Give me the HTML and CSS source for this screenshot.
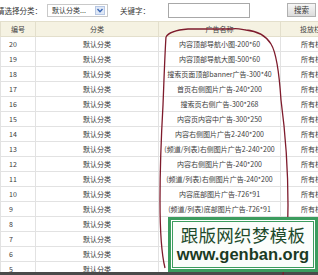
FILE: index.html
```html
<!DOCTYPE html>
<html>
<head>
<meta charset="utf-8">
<link rel="stylesheet" href="styles.css">
</head>
<body>
<div class="page">
  <div class="filter">
    <span class="label">请选择分类：</span>
    <div class="select"><span>默认分类...</span><i class="arrow"><svg width="8" height="7" viewBox="0 0 8 7"><path d="M1.5 2 L4 4.8 L6.5 2" fill="none" stroke="#3a66b5" stroke-width="1.4"/></svg></i></div>
    <span class="label kw">关键字：</span>
    <div class="input"></div>
    <div class="btn">搜索</div>
  </div>
  <table class="grid">
    <thead>
      <tr><th class="c-id">编号</th><th class="c-cat">分类</th><th class="c-name">广告名称</th><th class="c-pos">投放栏目</th></tr>
    </thead>
    <tbody>
      <tr><td class="c-id">20</td><td class="c-cat">默认分类</td><td class="c-name">内容顶部导航小图-200*60</td><td class="c-pos">所有栏目</td></tr>
      <tr><td class="c-id">19</td><td class="c-cat">默认分类</td><td class="c-name">内容顶部导航大图-500*60</td><td class="c-pos">所有栏目</td></tr>
      <tr><td class="c-id">18</td><td class="c-cat">默认分类</td><td class="c-name">搜索页面顶部banner广告-300*40</td><td class="c-pos">所有栏目</td></tr>
      <tr><td class="c-id">17</td><td class="c-cat">默认分类</td><td class="c-name">首页右侧图片广告-240*200</td><td class="c-pos">所有栏目</td></tr>
      <tr><td class="c-id">16</td><td class="c-cat">默认分类</td><td class="c-name">搜索页右侧广告-300*268</td><td class="c-pos">所有栏目</td></tr>
      <tr><td class="c-id">15</td><td class="c-cat">默认分类</td><td class="c-name">内容页内容中广告-300*250</td><td class="c-pos">所有栏目</td></tr>
      <tr><td class="c-id">14</td><td class="c-cat">默认分类</td><td class="c-name">内容右侧图片广告2-240*200</td><td class="c-pos">所有栏目</td></tr>
      <tr><td class="c-id">13</td><td class="c-cat">默认分类</td><td class="c-name">(频道/列表)右侧图片广告2-240*200</td><td class="c-pos">所有栏目</td></tr>
      <tr><td class="c-id">12</td><td class="c-cat">默认分类</td><td class="c-name">内容右侧图片广告-240*200</td><td class="c-pos">所有栏目</td></tr>
      <tr><td class="c-id">11</td><td class="c-cat">默认分类</td><td class="c-name">(频道/列表)右侧图片广告-240*200</td><td class="c-pos">所有栏目</td></tr>
      <tr><td class="c-id">10</td><td class="c-cat">默认分类</td><td class="c-name">内容底部图片广告-726*91</td><td class="c-pos">所有栏目</td></tr>
      <tr><td class="c-id">9</td><td class="c-cat">默认分类</td><td class="c-name">(频道/列表)底部图片广告-726*91</td><td class="c-pos">所有栏目</td></tr>
      <tr><td class="c-id">8</td><td class="c-cat">默认分类</td><td class="c-name">首页顶部图片广告-960*90</td><td class="c-pos">所有栏目</td></tr>
      <tr><td class="c-id">7</td><td class="c-cat">默认分类</td><td class="c-name">首页中部图片广告-960*90</td><td class="c-pos">所有栏目</td></tr>
      <tr><td class="c-id">6</td><td class="c-cat">默认分类</td><td class="c-name">首页底部图片广告-960*90</td><td class="c-pos">所有栏目</td></tr>
      <tr><td class="c-id">5</td><td class="c-cat">默认分类</td><td class="c-name">列表页顶部广告-960*90</td><td class="c-pos">所有栏目</td></tr>
    </tbody>
  </table>
  <div class="bottom-bar"></div>

  <svg class="scribble" width="318" height="275" viewBox="0 0 318 275">
    <path d="M166 37 C168 33 176 30 188 29 L232 29 C236 28 240 29 246 30 C258 31 266 36 271 44 C276 52 279 70 281 100 C285 130 288 165 288 205 C288 235 286 255 283 275" fill="none" stroke="#7e1b2c" stroke-width="1.3"/>
    <path d="M166 37 C165 50 164 80 163 105 C161 140 160 170 160 200 C160 230 161 252 165 268" fill="none" stroke="#7e1b2c" stroke-width="1.3"/>
  </svg>

  <div class="watermark">
    <div class="wm-inner">
      <div class="wm-cn">跟版网织梦模板</div>
      <div class="wm-en">www.genban.org</div>
    </div>
  </div>
</div>
</body>
</html>
```

FILE: styles.css
```css
html, body {
  margin: 0;
  padding: 0;
  background: #ffffff;
}
body {
  width: 318px;
  height: 275px;
  overflow: hidden;
  font-family: "Noto Sans CJK SC", "DejaVu Sans", sans-serif;
  font-size: 7px;
  color: #3a3a3a;
}
.page {
  position: relative;
  width: 318px;
  height: 275px;
  overflow: hidden;
}
.filter {
  display: flex;
  align-items: center;
  height: 20px;
  margin-left: -3px;
}
.label {
  font-size: 7.5px;
  color: #333;
  white-space: nowrap;
}
.select {
  display: flex;
  align-items: center;
  justify-content: space-between;
  box-sizing: border-box;
  width: 61px;
  height: 13px;
  margin-left: 5px;
  padding-left: 4px;
  padding-right: 2px;
  border: 1px solid #c9c9c9;
  font-size: 7px;
  color: #333;
}
.arrow {
  display: flex;
  align-items: center;
  justify-content: center;
  width: 10px;
  height: 9px;
  background: #dfe8f6;
  border: 1px solid #b7c7e3;
  box-sizing: border-box;
}
.kw {
  margin-left: 12px;
}
.input {
  box-sizing: border-box;
  width: 82px;
  height: 15px;
  margin-left: 18px;
  border: 1px solid #a8a8a8;
  background: #fff;
}
.btn {
  box-sizing: border-box;
  width: 29px;
  height: 14px;
  margin-left: 37px;
  border: 1px solid #b0b0b0;
  background: linear-gradient(#f7f7f7, #dcdcdc);
  font-size: 7.5px;
  line-height: 12px;
  text-align: center;
  color: #333;
}
.grid {
  border-collapse: collapse;
  table-layout: fixed;
  width: 340px;
  margin-top: 1px;
}
.grid th, .grid td {
  height: 14px;
  padding: 0;
  border: 1px solid #e2e2e2;
  white-space: nowrap;
  overflow: hidden;
  font-weight: normal;
  line-height: 14px;
}
.grid thead th {
  background: #f5f2e2;
  border-color: #e3dfcc;
  color: #444;
  text-align: center;
}
.grid .c-id { width: 34px; }
.grid .c-cat { width: 122px; text-align: center; }
.grid .c-name { width: 121px; text-align: center; }
.grid .c-pos { width: 60px; text-align: left; padding-left: 20px; }
.grid td.c-id { text-align: left; padding-left: 8px; box-sizing: border-box; }
.grid th.c-pos { text-align: left; padding-left: 19px; }
.bottom-bar {
  position: absolute;
  left: 0;
  top: 272px;
  width: 318px;
  height: 3px;
  background: #4a4a4a;
}
.scribble {
  position: absolute;
  left: 0;
  top: 0;
  pointer-events: none;
}
.watermark {
  position: absolute;
  left: 168px;
  top: 217px;
  width: 150px;
  height: 55px;
  box-sizing: border-box;
  padding: 4px;
  background: #3c9c5e;
}
.wm-inner {
  box-sizing: border-box;
  height: 100%;
  background: #fbfdfb;
  border: 1px solid #3c9c5e;
  box-shadow: 0 0 0 1px #ffffff;
  display: flex;
  flex-direction: column;
  align-items: center;
  justify-content: center;
}
.wm-cn {
  font-family: "Noto Sans CJK SC", sans-serif;
  font-size: 17.5px;
  line-height: 20px;
  color: #1d4a2b;
  letter-spacing: 0.3px;
}
.wm-en {
  font-family: "Liberation Sans", Arial, sans-serif;
  font-weight: bold;
  font-size: 16.5px;
  line-height: 19px;
  color: #1b3a24;
}
```
